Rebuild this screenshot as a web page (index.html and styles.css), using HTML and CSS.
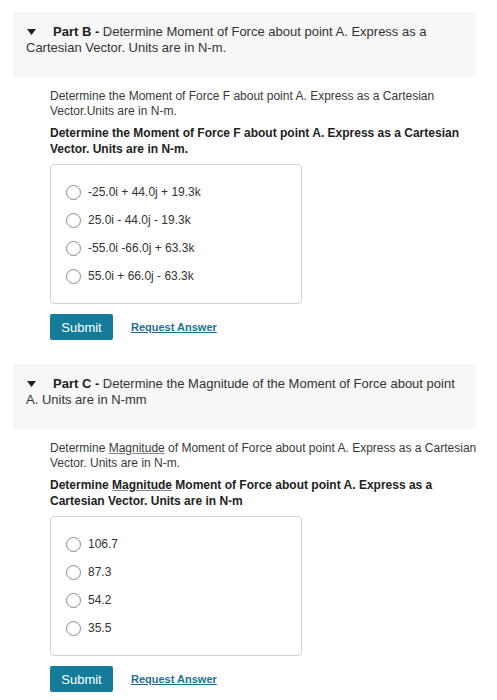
FILE: index.html
```html
<!DOCTYPE html>
<html lang="en">
<head>
<meta charset="utf-8">
<title>Parts B and C</title>
<link rel="stylesheet" href="styles.css">
</head>
<body>
<div class="page">
  <section class="part">
    <div class="part-head">
      <svg class="caret" width="9" height="6" viewBox="0 0 9 6"><polygon points="0,0 9,0 4.5,6" fill="#222"/></svg><b>Part B -</b> Determine Moment of Force about point A. Express as a Cartesian Vector. Units are in N-m.
    </div>
    <div class="part-body">
      <p class="prompt">Determine the Moment of Force F about point A. Express as a Cartesian Vector.Units are in N-m.</p>
      <p class="question">Determine the Moment of Force F about point A. Express as a Cartesian Vector. Units are in N-m.</p>
      <div class="choices">
        <label class="choice"><span class="radio"></span>-25.0i + 44.0j + 19.3k</label>
        <label class="choice"><span class="radio"></span>25.0i - 44.0j - 19.3k</label>
        <label class="choice"><span class="radio"></span>-55.0i -66.0j + 63.3k</label>
        <label class="choice"><span class="radio"></span>55.0i + 66.0j - 63.3k</label>
      </div>
      <div class="actions">
        <button class="submit" type="button">Submit</button>
        <a class="request" href="#">Request Answer</a>
      </div>
    </div>
  </section>

  <section class="part part-c">
    <div class="part-head">
      <svg class="caret" width="9" height="6" viewBox="0 0 9 6"><polygon points="0,0 9,0 4.5,6" fill="#222"/></svg><b>Part C -</b> Determine the Magnitude of the Moment of Force about point A. Units are in N-mm
    </div>
    <div class="part-body">
      <p class="prompt">Determine <u>Magnitude</u> of Moment of Force about point A. Express as a Cartesian Vector. Units are in N-m.</p>
      <p class="question">Determine <u>Magnitude</u> Moment of Force about point A. Express as a Cartesian Vector. Units are in N-m</p>
      <div class="choices">
        <label class="choice"><span class="radio"></span>106.7</label>
        <label class="choice"><span class="radio"></span>87.3</label>
        <label class="choice"><span class="radio"></span>54.2</label>
        <label class="choice"><span class="radio"></span>35.5</label>
      </div>
      <div class="actions">
        <button class="submit" type="button">Submit</button>
        <a class="request" href="#">Request Answer</a>
      </div>
    </div>
  </section>
</div>
</body>
</html>
```
FILE: styles.css
```css
* {
  box-sizing: border-box;
}

body {
  margin: 0;
  background: #fff;
  font-family: "Liberation Sans", Arial, Helvetica, sans-serif;
  color: #333;
}

.page {
  padding: 12px 0 0 13px;
}

.part-c {
  margin-top: 24px;
}

.part-head {
  width: 463px;
  background: #f7f7f7;
  padding: 12px 11px 21px 13px;
  font-size: 13px;
  line-height: 16px;
  color: #333;
}

.part-head b {
  color: #222;
}

.caret {
  display: inline-block;
  margin: 0 17px 2px 1px;
  vertical-align: middle;
}

.part-body {
  padding: 12px 17px 0 37px;
}

.prompt {
  margin: 0;
  font-size: 12px;
  line-height: 15px;
  color: #3a3a3a;
}

.question {
  margin: 6px 0 0;
  font-size: 12px;
  line-height: 16px;
  font-weight: bold;
  color: #222;
}

.prompt u,
.question u {
  text-decoration-color: #888;
}

.choices {
  width: 252px;
  margin-top: 7px;
  padding: 13px 0 13px 15px;
  border: 1.5px solid #d2d2d2;
  border-radius: 4px;
  display: flex;
  flex-direction: column;
}

.choice {
  height: 28px;
  display: flex;
  align-items: center;
  gap: 7px;
  font-size: 12px;
  color: #333;
}

.radio {
  width: 15px;
  height: 15px;
  border: 1.5px solid #8a8a8a;
  border-radius: 50%;
  background: #fff;
}

.actions {
  margin-top: 10px;
  display: flex;
  align-items: center;
  gap: 18px;
}

.submit {
  width: 63px;
  height: 26px;
  border: 0;
  border-radius: 2px;
  background: #147b9b;
  color: #fff;
  font-family: inherit;
  font-size: 13px;
  padding: 0;
}

.request {
  font-size: 11px;
  font-weight: bold;
  color: #1f6f93;
  text-decoration: underline;
  text-underline-offset: 1px;
}
```
